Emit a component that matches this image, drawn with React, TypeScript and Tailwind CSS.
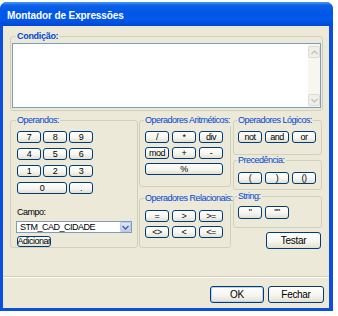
import type { ReactNode } from 'react'

const btnBase =
  'flex items-center justify-center rounded-[3px] border border-[#003c74] bg-[linear-gradient(180deg,#ffffff_0%,#f6f5f0_55%,#e3e0d3_100%)] text-black leading-none whitespace-nowrap overflow-hidden'

function XpButton({ children, className = '' }: { children: ReactNode; className?: string }) {
  return <button className={`${btnBase} ${className}`}>{children}</button>
}

function GroupBox({
  title,
  className = '',
  legendClass = '',
  children,
}: {
  title: string
  className?: string
  legendClass?: string
  children: ReactNode
}) {
  return (
    <fieldset className={`min-w-0 rounded-[3px] border border-[#d0d0bf] ${className}`}>
      <legend className={`whitespace-nowrap px-[1px] text-[9px] leading-[11px] text-[#0046d5] ${legendClass}`}>
        {title}
      </legend>
      {children}
    </fieldset>
  )
}

function Chevron({ up, color }: { up?: boolean; color: string }) {
  return (
    <svg width="7" height="5" viewBox="0 0 7 5">
      <path
        d={up ? 'M0.5 4L3.5 1L6.5 4' : 'M0.5 1L3.5 4L6.5 1'}
        fill="none"
        stroke={color}
        strokeWidth="1.4"
      />
    </svg>
  )
}

export default function App() {
  const opBtn = 'h-[12px] w-[24px]'

  return (
    <div className="h-[316px] w-[338px] bg-white pt-[2px] font-['Liberation_Sans',Arial,sans-serif] text-[9px] tracking-[-0.5px]">
      <div className="flex h-[309px] w-[333px] flex-col rounded-t-[7px] bg-[#0a4fdf]">
        {/* title bar */}
        <div className="flex h-[24px] items-center rounded-t-[7px] bg-[linear-gradient(180deg,#4a9af7_0%,#0c61e8_14%,#0056e6_45%,#035ae9_72%,#0047d6_100%)] pl-[7px] pt-[3px]">
          <span className="text-[10px] font-bold tracking-[-0.1px] text-white">Montador de Expressões</span>
        </div>

        {/* client */}
        <div className="mb-[3px] ml-[3px] mr-[4px] flex flex-1 flex-col bg-[#ece9d8]">
          <div className="flex h-[250px] flex-col">
            <GroupBox
              title="Condição:"
              className="ml-[7px] mt-[5px] h-[80px] w-[313px]"
              legendClass="ml-[5px] font-bold tracking-[-0.3px]"
            >
              <div className="px-[1px] pt-[1px]">
                <div className="flex h-[65px] justify-end border border-[#7f9db9] bg-white">
                  <div className="flex w-[12px] flex-col justify-between bg-[#f7f6f1] pb-[1px] pt-[2px]">
                    <div className="flex h-[12px] items-center justify-center rounded-[2px] border border-[#dcdbd3] bg-[#f0efe9]">
                      <Chevron up color="#c6c3b4" />
                    </div>
                    <div className="flex h-[12px] items-center justify-center rounded-[2px] border border-[#dcdbd3] bg-[#f0efe9]">
                      <Chevron color="#c6c3b4" />
                    </div>
                  </div>
                </div>
              </div>
            </GroupBox>

            <div className="ml-[7px] mt-[4px] flex">
              {/* Operandos */}
              <GroupBox title="Operandos:" className="h-[133px] w-[128px]" legendClass="ml-[5px]">
                <div className="flex flex-col pl-[6px] pt-[5px]">
                  <div className="grid grid-cols-[24px_24px_24px] gap-x-[2px] gap-y-[5px]">
                    {['7', '8', '9', '4', '5', '6', '1', '2', '3'].map((n) => (
                      <XpButton key={n} className="h-[12px]">
                        {n}
                      </XpButton>
                    ))}
                    <XpButton className="col-span-2 h-[12px]">0</XpButton>
                    <XpButton className="h-[12px]">.</XpButton>
                  </div>
                  <span className="mt-[13px] leading-[11px] text-black">Campo:</span>
                  <div className="-ml-px mt-[3px] flex h-[12px] w-[116px] items-center border border-[#7f9db9] bg-white pl-[3px]">
                    <span className="flex-1 leading-none text-black">STM_CAD_CIDADE</span>
                    <div className="flex h-[10px] w-[11px] items-center justify-center rounded-[1px] border border-[#b8c8f0] bg-[linear-gradient(180deg,#dde6fb_0%,#bccdf5_100%)]">
                      <Chevron color="#4d6185" />
                    </div>
                  </div>
                  <XpButton className="mt-[3px] h-[11px] w-[34px]">Adicionar</XpButton>
                </div>
              </GroupBox>

              {/* middle column */}
              <div className="ml-[1px] flex w-[92px] flex-col">
                <GroupBox title="Operadores Aritméticos:" className="h-[72px] w-[92px]" legendClass="ml-[4px]">
                  <div className="grid grid-cols-[24px_24px_24px] gap-x-[3px] gap-y-[4px] pl-[5px] pt-[5px]">
                    {['/', '*', 'div', 'mod', '+', '-'].map((o) => (
                      <XpButton key={o} className={opBtn}>
                        {o}
                      </XpButton>
                    ))}
                    <XpButton className="col-span-3 h-[12px]">%</XpButton>
                  </div>
                </GroupBox>
                <GroupBox title="Operadores Relacionais:" className="mt-[6px] h-[55px] w-[92px]" legendClass="ml-[4px]">
                  <div className="grid grid-cols-[24px_24px_24px] gap-x-[3px] gap-y-[4px] pl-[5px] pt-[6px]">
                    {['=', '>', '>=', '<>', '<', '<='].map((o) => (
                      <XpButton key={o} className={opBtn}>
                        {o}
                      </XpButton>
                    ))}
                  </div>
                </GroupBox>
              </div>

              {/* right column */}
              <div className="ml-[2px] flex w-[89px] flex-col">
                <GroupBox title="Operadores Lógicos:" className="h-[40px] w-[89px]" legendClass="ml-[3px]">
                  <div className="flex gap-[3px] pl-[4px] pt-[5px]">
                    {['not', 'and', 'or'].map((o) => (
                      <XpButton key={o} className={opBtn}>
                        {o}
                      </XpButton>
                    ))}
                  </div>
                </GroupBox>
                <GroupBox title="Precedência:" className="h-[35px] w-[89px]" legendClass="ml-[3px]">
                  <div className="flex gap-[3px] pl-[4px] pt-[6px]">
                    {['(', ')', '()'].map((o) => (
                      <XpButton key={o} className={opBtn}>
                        {o}
                      </XpButton>
                    ))}
                  </div>
                </GroupBox>
                <GroupBox title="String:" className="mt-[1px] h-[37px] w-[89px]" legendClass="ml-[3px]">
                  <div className="flex gap-[3px] pl-[4px] pt-[4px]">
                    {['"', '""'].map((o) => (
                      <XpButton key={o} className="h-[13px] w-[24px]">
                        {o}
                      </XpButton>
                    ))}
                  </div>
                </GroupBox>
                <XpButton className="mr-[1px] mt-[4px] h-[17px] w-[55px] self-end text-[10px] tracking-[-0.3px]">
                  Testar
                </XpButton>
              </div>
            </div>
          </div>

          {/* footer */}
          <div className="flex flex-1 justify-end gap-[4px] border-t border-[#d0d0bf] pr-[5px] pt-[9px] shadow-[inset_0_1px_0_#ffffff]">
            <XpButton className="h-[17px] w-[54px] text-[10px] tracking-[-0.3px] shadow-[inset_0_0_0_1px_#bcd2f6]">OK</XpButton>
            <XpButton className="h-[17px] w-[56px] text-[10px] tracking-[-0.3px]">Fechar</XpButton>
          </div>
        </div>
      </div>
    </div>
  )
}
